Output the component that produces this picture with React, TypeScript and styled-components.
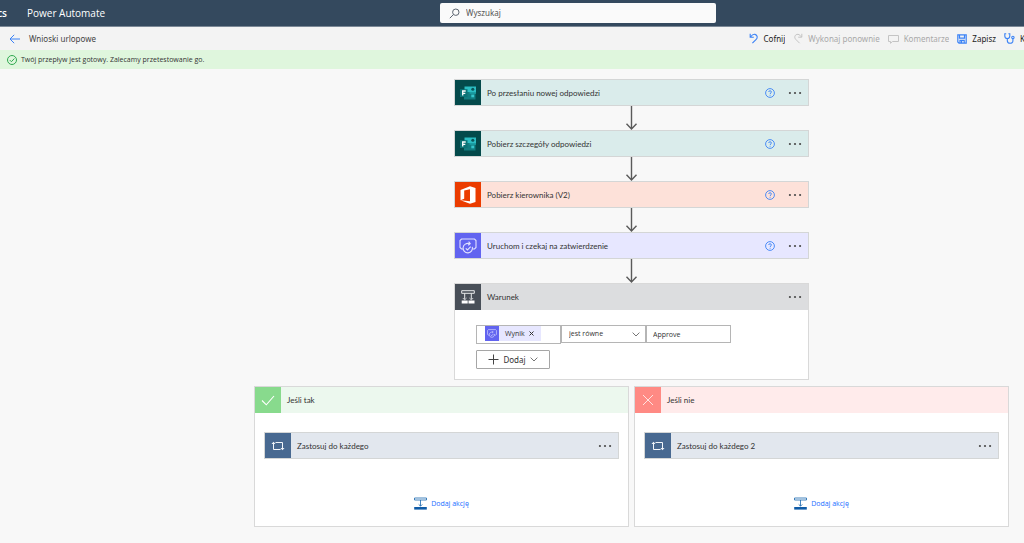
import React from "react";
import styled, { createGlobalStyle } from "styled-components";

const font = '"Noto Sans", "Open Sans", sans-serif';
const narrowFont = '"Open Sans", "Noto Sans", sans-serif';
const titleFont = 'Lato, "Open Sans", sans-serif';

const GlobalStyle = createGlobalStyle`
  *, *::before, *::after { box-sizing: border-box; }
  body {
    margin: 0;
    min-height: 100vh;
    background: #f8f8f8;
    color: #333;
    font-family: ${font};
    font-size: 8px;
    line-height: 12px;
  }
  button, input, select { font: inherit; color: inherit; margin: 0; }
  svg { display: block; flex: none; }
`;

/* ---------- header ---------- */

const Header = styled.header`
  display: grid;
  grid-template-columns: 10fr minmax(0, 276px) 7fr;
  align-items: center;
  height: 27px;
  background: #34495e;
  border-bottom: 1px solid #7b8896;
  color: #fff;
  font-family: ${narrowFont};
  font-size: 10px;
`;

const Brand = styled.div`
  display: flex;
  align-items: center;
  gap: 20px;
`;

const Suite = styled.span`
  display: flex;
  justify-content: flex-end;
  width: 7px;
  font-weight: 600;
`;

const SearchBox = styled.label`
  display: flex;
  align-items: center;
  gap: 6px;
  height: 20px;
  padding-left: 9px;
  background: #fafafa;
  border-radius: 2px;
  color: #605e5c;
  font-family: ${font};
  font-size: 8px;
`;

const SearchInput = styled.input`
  flex: 1;
  min-width: 0;
  padding: 0;
  border: 0;
  outline: 0;
  background: transparent;
  &::placeholder { color: #555; opacity: 1; }
`;

/* ---------- command bar and message ---------- */

const CommandBar = styled.nav`
  display: flex;
  align-items: center;
  justify-content: space-between;
  height: 23px;
  padding-left: 9px;
  background: #f3f3f3;
  overflow: hidden;
`;

const Title = styled.h1`
  display: flex;
  align-items: center;
  gap: 9px;
  margin: 0;
  font-size: 8px;
  font-weight: 400;
  line-height: 12px;
  color: #444;
`;

const Commands = styled.div`
  display: flex;
  gap: 8px;
`;

const IconButton = styled.button`
  display: flex;
  padding: 0;
  border: 0;
  background: none;
  cursor: pointer;
`;

const Command = styled(IconButton)<{ $clipped?: boolean }>`
  align-items: center;
  gap: 5px;
  width: ${(p) => (p.$clipped ? "20px" : "auto")};
  overflow: hidden;
  white-space: nowrap;
  color: #222;
  &:disabled { color: #a9a9a9; cursor: default; }
`;

const Banner = styled.div`
  display: flex;
  align-items: center;
  gap: 4px;
  height: 19px;
  padding-left: 7px;
  background: #dff6dd;
  font-family: ${narrowFont};
  font-size: 7px;
`;

/* ---------- flow canvas ---------- */

const Canvas = styled.main`
  display: flex;
  flex-direction: column;
  align-items: center;
  padding: 10px 15px 16px 254px;
`;

const Card = styled.section<{ $tint: string }>`
  display: flex;
  align-items: center;
  width: 100%;
  max-width: 355px;
  height: 27px;
  padding-right: 6px;
  background: ${(p) => p.$tint};
  border: 1px solid #d4d6d6;
`;

const Tile = styled.span<{ $color: string }>`
  display: flex;
  flex: none;
  align-items: center;
  justify-content: center;
  width: 26px;
  height: 100%;
  background: ${(p) => p.$color};
`;

const CardTitle = styled.h2`
  flex: 1;
  margin: 0 0 0 6px;
  font-family: ${titleFont};
  font-size: 8px;
  font-weight: 400;
  line-height: 12px;
`;

const CardActions = styled.div`
  display: flex;
  align-items: center;
  gap: 13px;
`;

const Panel = styled.section`
  background: #fff;
  border: 1px solid #d9d9d9;
`;

const PanelHead = styled.div<{ $tint: string }>`
  display: flex;
  align-items: center;
  height: 26px;
  padding-right: 6px;
  background: ${(p) => p.$tint};
`;

const ConditionPanel = styled(Panel)`
  width: 100%;
  max-width: 355px;
`;

const ConditionBody = styled.div`
  display: flex;
  flex-direction: column;
  align-items: flex-start;
  gap: 6px;
  padding: 15px 21px 10px;
`;

const Expression = styled.div`
  display: flex;
  align-items: flex-start;
  font-family: ${narrowFont};
  font-size: 7px;
`;

const TokenField = styled.div`
  width: 85px;
  height: 19px;
  padding: 0 8px;
  background: #fff;
  border: 1px solid #b5b5b5;
`;

const Token = styled.span`
  display: flex;
  align-items: center;
  width: 56px;
  height: 15px;
  background: #e7e7ff;
`;

const TokenIcon = styled.span`
  display: flex;
  align-items: center;
  justify-content: center;
  width: 14px;
  height: 15px;
  margin-right: 6px;
  background: #6264f0;
`;

const TokenRemove = styled(IconButton)`
  margin-left: 4px;
`;

const SelectWrap = styled.div`
  display: grid;
  align-items: center;
  width: 85px;
  > * { grid-area: 1 / 1; }
  > svg { justify-self: end; margin-right: 6px; pointer-events: none; }
`;

const Select = styled.select`
  appearance: none;
  width: 100%;
  height: 18px;
  padding: 0 7px;
  background: #fff;
  border: 1px solid #b5b5b5;
  border-radius: 0;
`;

const ValueInput = styled.input`
  width: 85px;
  height: 18px;
  padding: 0 6px;
  background: #fff;
  border: 1px solid #b5b5b5;
`;

const AddButton = styled.button`
  display: flex;
  align-items: center;
  justify-content: center;
  gap: 4px;
  width: 74px;
  height: 19px;
  padding: 0;
  background: #fff;
  border: 1px solid #a6a6a6;
  border-radius: 1px;
`;

const Branches = styled.div`
  display: grid;
  grid-template-columns: 1fr 1fr;
  gap: 5px;
  width: 100%;
  margin-top: 6px;
`;

const BranchBody = styled.div`
  display: flex;
  flex-direction: column;
  align-items: center;
  gap: 38px;
  padding: 19px 9px 16px;
`;

const AddAction = styled(IconButton)`
  align-items: center;
  gap: 4px;
  color: #1a6dff;
  font-family: ${narrowFont};
  font-size: 7px;
`;

/* ---------- drawings ---------- */

const blue = "#3b82f6";

const SearchIcon = () => (
  <svg width="11" height="11" viewBox="0 0 11 11" fill="none" stroke="#5b6470">
    <circle cx="6.8" cy="4.2" r="3.2" />
    <path d="M4.4 6.6 .8 10.2" />
  </svg>
);

const BackIcon = () => (
  <svg width="11" height="10" viewBox="0 0 11 10" fill="none" stroke={blue}>
    <path d="M11 5H1M5.2.8 1 5l4.2 4.2" />
  </svg>
);

const UndoIcon = () => (
  <svg width="10" height="11" viewBox="0 0 10 11" fill="none" stroke={blue} strokeWidth="1.1">
    <path d="M1.2.8v3.4h3.6M1.4 4C3.2 1.8 4.6 1 6 1.4c2.600.7 2.800 3.400 1.200 5L3.400 10.200" />
  </svg>
);

const RedoIcon = () => (
  <svg width="10" height="11" viewBox="0 0 10 11" fill="none" stroke="#c4c4c4">
    <path d="M8.800.8v3.400H5.200M8.600 4C6.800 1.800 5.400 1 4 1.400c-2.600.7-2.800 3.400-1.200 5l3.800 3.800" />
  </svg>
);

const CommentIcon = () => (
  <svg width="11" height="10" viewBox="0 0 11 10" fill="none" stroke="#c4c4c4">
    <path d="M.5 1.500h10v6H4.500L2.500 9.300V7.500h-2z" />
  </svg>
);

const SaveIcon = () => (
  <svg width="10" height="10" viewBox="0 0 10 10" fill="none" stroke={blue} strokeWidth="1.2">
    <path d="M.8.8h8.400v8.400H2L.8 8zM2.500.8v3.400h5V.8M3 9V6.400h4.200V9" />
    <path d="M4.600 6.500V9" />
  </svg>
);

const CheckerIcon = () => (
  <svg width="11" height="11" viewBox="0 0 11 11" fill="none" stroke={blue} strokeWidth="1.1">
    <path d="M2.200.8H.8V3c0 3.400 5 3.400 5 0V.8H4.400M3.300 5.600v1.800c0 3.800 5.600 3.600 5.600.6V5.600" />
    <circle cx="8.900" cy="4.400" r="1.200" />
  </svg>
);

const OkIcon = () => (
  <svg width="10" height="10" viewBox="0 0 10 10" fill="none" stroke="#2fa84f">
    <circle cx="5" cy="5" r="4.500" />
    <path d="m2.800 5.100 1.600 1.600 3-3.200" />
  </svg>
);

const HelpIcon = () => (
  <svg width="10" height="10" viewBox="0 0 10 10" fill="none" stroke={blue} strokeWidth=".9">
    <circle cx="5" cy="5" r="4.400" />
    <path d="M3.700 4c0-1.700 2.700-1.700 2.700 0 0 .9-1.300.9-1.300 2M5.100 6.800v.9" />
  </svg>
);

const DotsIcon = () => (
  <svg width="14" height="4" viewBox="0 0 14 4" fill="#4a4a4a">
    <circle cx="1.900" cy="2" r="1.100" />
    <circle cx="7" cy="2" r="1.100" />
    <circle cx="12.100" cy="2" r="1.100" />
  </svg>
);

const FormsIcon = () => (
  <svg width="16" height="14" viewBox="0 0 16 14">
    <path fill="#2bbdc2" d="M4.500.5H16v5.500H4.500z" />
    <path fill="#107c80" d="M4 6h11.500v7.500H4z" />
    <path fill="#1a9ea3" d="M9.500 6H16v1.800H9.500z" />
    <circle cx="12.800" cy="3.300" r="1.500" fill="#0a5658" />
    <path fill="#36c6cb" d="M11.300 8.600h2.900v2.700h-2.900z" />
    <path fill="#0b7376" d="M0 3.200h7.500v7.800H0z" />
    <path d="M2.700 9.600V5h3M2.700 7.300h2.600" fill="none" stroke="#fff" strokeWidth="1.300" />
  </svg>
);

const OfficeIcon = () => (
  <svg width="16" height="18" viewBox="0 0 16 18" fill="#fff">
    <path fillRule="evenodd" d="M.5 4 10 .3l5.500 1.600v14.200L10 17.700.5 14.200 10 15.300V3.200L4.200 4.600v8.200L.5 14.200z" />
  </svg>
);

const ApprovalIcon = ({ small }: { small?: boolean }) => (
  <svg
    width={small ? 10 : 18}
    height={small ? 9 : 16}
    viewBox="0 0 18 16"
    fill="none"
    stroke="#e2e2ff"
    strokeWidth="1.1"
  >
    <path d="M4.200 11H2.500L1 9.500v-7L2.500 1h13L17 2.500v7L15.500 11h-1.700" />
    <path d="M10.300 5.700a4.700 4.700 0 1 0 3 3.200M9.600 3.600l1.600 2-2 1.600" />
    <path d="m6.800 10.300 1.700 1.700 3.200-3.400" />
  </svg>
);

const ConditionIcon = () => (
  <svg width="14" height="14" viewBox="0 0 14 14" fill="none" stroke="#e8eaec">
    <path d="M.7.7h12.600v2.600H.7zM3.700 3.300v6M10.300 3.300v6" />
    <path d="m1.800 8 1.900 1.900L5.600 8M8.400 8l1.900 1.900L12.200 8" strokeWidth=".8" />
    <path d="M.7 10.600h6v2.800h-6zM7.500 10.600h6v2.800h-6z" fill="#fff" stroke="none" />
  </svg>
);

const LoopIcon = () => (
  <svg width="14" height="10" viewBox="0 0 14 10" fill="none" stroke="#f2f6fb">
    <path d="M4.500 1.500h7v6.500M9.500 8.500h-7V2" />
    <path d="M.5 3 2.500.8 4.500 3zM9.500 7l2 2.200 2-2.200z" fill="#f2f6fb" stroke="none" />
  </svg>
);

const CheckIcon = () => (
  <svg width="14" height="11" viewBox="0 0 14 11" fill="none" stroke="#fff" strokeWidth="1.1">
    <path d="m1 5.500 4.300 4.300L13 1" />
  </svg>
);

const CrossIcon = () => (
  <svg width="12" height="12" viewBox="0 0 12 12" fill="none" stroke="#ffe3e1">
    <path d="m1 1 10 10M11 1 1 11" />
  </svg>
);

const InsertIcon = () => (
  <svg width="13" height="13" viewBox="0 0 13 13" fill="none" stroke="#1564ad">
    <path d="M.5 1h12v2H.5zM6.500 3v6M4.700 7.400l1.800 1.800 1.800-1.800" strokeWidth=".8" />
    <path d="M.2 10h12.600v2.600H.2z" fill="#0f5ba7" stroke="none" />
  </svg>
);

const ChevronIcon = () => (
  <svg width="8" height="5" viewBox="0 0 8 5" fill="none" stroke="#666" strokeWidth=".9">
    <path d="m.6.6 3.400 3.400L7.400.6" />
  </svg>
);

const PlusIcon = () => (
  <svg width="11" height="11" viewBox="0 0 11 11" fill="none" stroke="#444">
    <path d="M5.500.5v10M.5 5.500h10" />
  </svg>
);

const RemoveIcon = () => (
  <svg width="5" height="5" viewBox="0 0 5 5" fill="none" stroke="#333">
    <path d="m.5.5 4 4M4.500.5l-4 4" />
  </svg>
);

const Arrow = () => (
  <svg width="13" height="24" viewBox="0 0 13 24" fill="none" stroke="#5a5a5a" strokeWidth="1.400">
    <path d="M6.500 0v23M1.500 17.800l5 5.200 5-5.200" />
  </svg>
);

/* ---------- page ---------- */

const steps = [
  { title: "Po przesłaniu nowej odpowiedzi", tint: "#daeceb", color: "#044a4b", icon: <FormsIcon /> },
  { title: "Pobierz szczegóły odpowiedzi", tint: "#daeceb", color: "#044a4b", icon: <FormsIcon /> },
  { title: "Pobierz kierownika (V2)", tint: "#fde1d9", color: "#eb3c00", icon: <OfficeIcon /> },
  { title: "Uruchom i czekaj na zatwierdzenie", tint: "#e7e7ff", color: "#6264f0", icon: <ApprovalIcon /> },
];

const branches = [
  { title: "Jeśli tak", tint: "#ecf8ee", color: "#88da8d", icon: <CheckIcon />, loop: "Zastosuj do każdego" },
  { title: "Jeśli nie", tint: "#ffebeb", color: "#ff8a84", icon: <CrossIcon />, loop: "Zastosuj do każdego 2" },
];

const MoreButton = () => (
  <IconButton type="button" aria-label="Menu">
    <DotsIcon />
  </IconButton>
);

export default function App() {
  return (
    <>
      <GlobalStyle />
      <Header>
        <Brand>
          <Suite>cs</Suite>
          <span>Power Automate</span>
        </Brand>
        <SearchBox>
          <SearchIcon />
          <SearchInput type="search" placeholder="Wyszukaj" aria-label="Wyszukaj" />
        </SearchBox>
      </Header>

      <CommandBar>
        <Title>
          <IconButton type="button" aria-label="Wstecz">
            <BackIcon />
          </IconButton>
          Wnioski urlopowe
        </Title>
        <Commands>
          <Command type="button"><UndoIcon />Cofnij</Command>
          <Command type="button" disabled><RedoIcon />Wykonaj ponownie</Command>
          <Command type="button" disabled><CommentIcon />Komentarze</Command>
          <Command type="button"><SaveIcon />Zapisz</Command>
          <Command type="button" $clipped><CheckerIcon />K</Command>
        </Commands>
      </CommandBar>

      <Banner role="status">
        <OkIcon />
        Twój przepływ jest gotowy. Zalecamy przetestowanie go.
      </Banner>

      <Canvas>
        {steps.map((step) => (
          <React.Fragment key={step.title}>
            <Card $tint={step.tint}>
              <Tile $color={step.color}>{step.icon}</Tile>
              <CardTitle>{step.title}</CardTitle>
              <CardActions>
                <IconButton type="button" aria-label="Pomoc">
                  <HelpIcon />
                </IconButton>
                <MoreButton />
              </CardActions>
            </Card>
            <Arrow />
          </React.Fragment>
        ))}

        <ConditionPanel>
          <PanelHead $tint="#dcdddf">
            <Tile $color="#484f58"><ConditionIcon /></Tile>
            <CardTitle>Warunek</CardTitle>
            <MoreButton />
          </PanelHead>
          <ConditionBody>
            <Expression>
              <TokenField>
                <Token>
                  <TokenIcon><ApprovalIcon small /></TokenIcon>
                  Wynik
                  <TokenRemove type="button" aria-label="Usuń"><RemoveIcon /></TokenRemove>
                </Token>
              </TokenField>
              <SelectWrap>
                <Select aria-label="Operator" defaultValue="eq">
                  <option value="eq">jest równe</option>
                </Select>
                <ChevronIcon />
              </SelectWrap>
              <ValueInput aria-label="Wartość" defaultValue="Approve" />
            </Expression>
            <AddButton type="button">
              <PlusIcon />
              Dodaj
              <ChevronIcon />
            </AddButton>
          </ConditionBody>
        </ConditionPanel>

        <Branches>
          {branches.map((branch) => (
            <Panel key={branch.title}>
              <PanelHead $tint={branch.tint}>
                <Tile $color={branch.color}>{branch.icon}</Tile>
                <CardTitle>{branch.title}</CardTitle>
              </PanelHead>
              <BranchBody>
                <Card $tint="#e2e7ee">
                  <Tile $color="#486991"><LoopIcon /></Tile>
                  <CardTitle>{branch.loop}</CardTitle>
                  <MoreButton />
                </Card>
                <AddAction type="button">
                  <InsertIcon />
                  Dodaj akcję
                </AddAction>
              </BranchBody>
            </Panel>
          ))}
        </Branches>
      </Canvas>
    </>
  );
}
